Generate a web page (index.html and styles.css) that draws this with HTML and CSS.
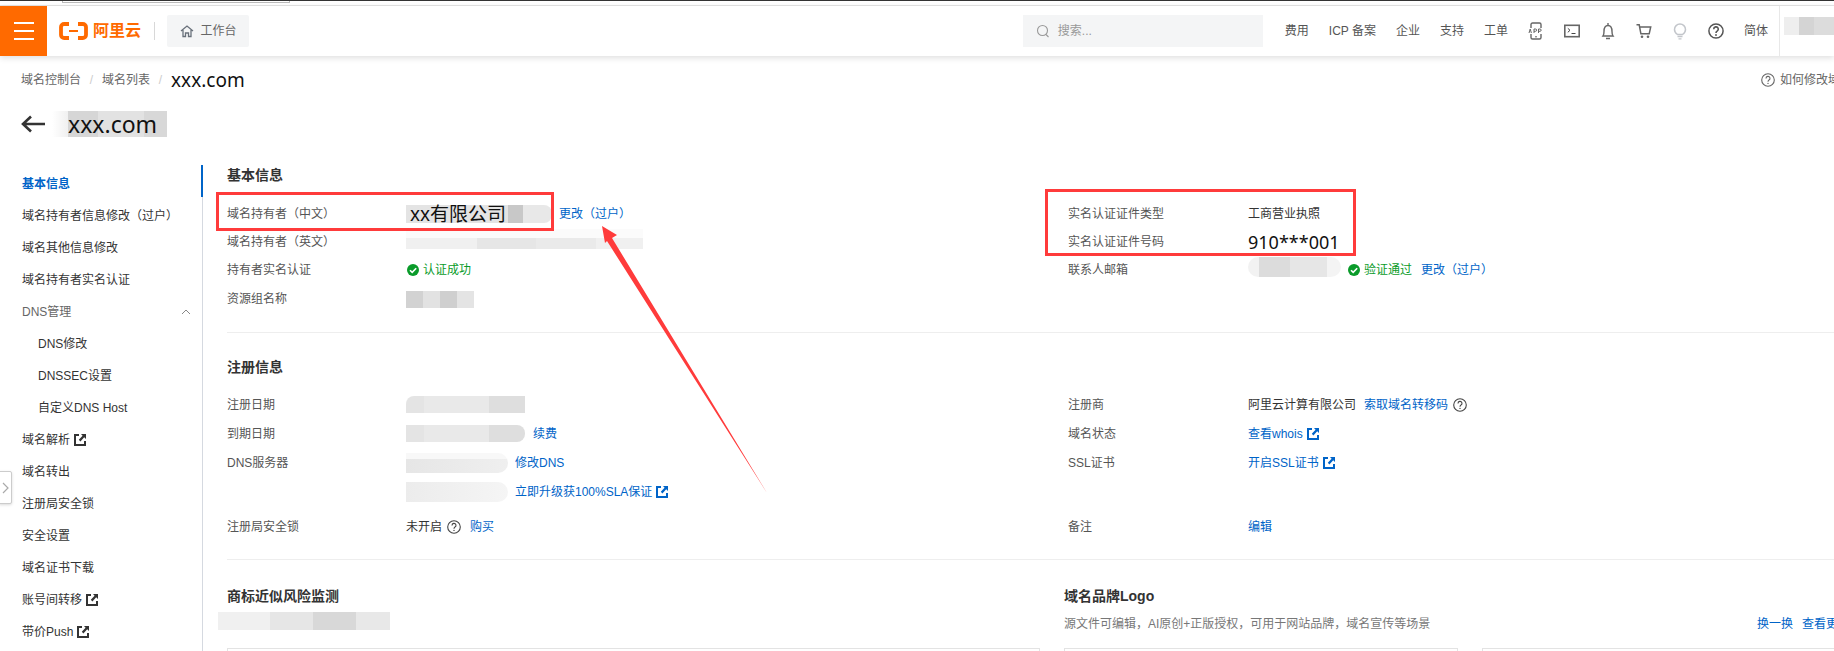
FILE: index.html
```html
<!DOCTYPE html>
<html lang="zh-CN">
<head>
    <meta charset="UTF-8">
    <meta name="viewport" content="width=device-width, initial-scale=1.0">
    <title>域名详情 - xxx.com</title>
    <link rel="stylesheet" href="styles.css">
</head>
<body>
    <svg class="icon-defs" width="0" height="0" aria-hidden="true">
        <symbol id="i-ext" viewBox="0 0 12 12">
            <path d="M5 1H1v10h10V7" fill="none" stroke="currentColor" stroke-width="2"/>
            <path d="M7 0h5v5L10.2 3.2 6.400 7.400 4.800 5.800l3.800-4z" fill="currentColor"/>
        </symbol>
        <symbol id="i-check" viewBox="0 0 12 12">
            <circle cx="6" cy="6" r="6" fill="#0a9b2a"/>
            <path d="M3 6.200l2.200 2.200L9.200 4.200" fill="none" stroke="#fff" stroke-width="1.600"/>
        </symbol>
        <symbol id="i-help" viewBox="0 0 14 14">
            <circle cx="7" cy="7" r="6.300" fill="none" stroke="currentColor" stroke-width="1.100"/>
            <path d="M5 5.400a2 2 0 1 1 3 1.700c-.7.400-1 .8-1 1.600" fill="none" stroke="currentColor" stroke-width="1.100"/>
            <circle cx="7" cy="10.400" r=".7" fill="currentColor"/>
        </symbol>
    </svg>

    <div class="tab-strip"><div class="tab-outline"></div></div>

    <!-- Barra superior -->
    <header class="topbar">
        <button class="menu-btn" aria-label="menu"><i></i><i></i><i></i></button>
        <div class="logo">
            <svg class="logo-mark" width="29" height="18" viewBox="0 0 29 18">
                <path d="M10 2H5.200C3.400 2 2 3.400 2 5v8c0 1.600 1.400 3 3.200 3H10M19 2h4.800C25.600 2 27 3.400 27 5v8c0 1.600-1.400 3-3.200 3H19" fill="none" stroke="#ff6a00" stroke-width="3.800"/>
                <rect x="10" y="8" width="9" height="2" fill="#ff6a00"/>
            </svg>
            <span class="logo-text">阿里云</span>
        </div>
        <div class="logo-sep"></div>
        <a class="workbench">
            <svg width="14" height="14" viewBox="0 0 14 14"><path d="M1 7l6-5 6 5M3 6v6.500h2.500V9h3v3.500H11V6" fill="none" stroke="#68707a" stroke-width="1.300"/></svg>
            工作台
        </a>
        <div class="search">
            <svg width="14" height="14" viewBox="0 0 14 14"><circle cx="6.500" cy="6.500" r="5" fill="none" stroke="#999" stroke-width="1.100"/><path d="M10 10.500l2.500 2.500" stroke="#999" stroke-width="1.100"/></svg>
            <span>搜索...</span>
        </div>
        <nav class="top-nav">
            <a>费用</a>
            <a>ICP 备案</a>
            <a>企业</a>
            <a>支持</a>
            <a>工单</a>
            <svg width="16" height="18" viewBox="0 0 16 18"><rect x="3" y="1" width="10" height="16" rx="1.500" fill="none" stroke="#666" stroke-width="1.400"/><rect x="0" y="6" width="16" height="6" fill="#fff"/><path d="M1 11l1.200-4 1.200 4M6 11V7h1.500a1 1 0 0 1 0 2.300H6M10.500 11V7H12a1 1 0 0 1 0 2.300h-1.500" fill="none" stroke="#666"/><path d="M7 14.800h2" stroke="#666"/></svg>
            <svg width="16" height="14" viewBox="0 0 16 14"><rect x=".8" y="1.300" width="14.400" height="11.400" fill="none" stroke="#666" stroke-width="1.600"/><path d="M3.800 4.300L6 6.300 3.800 8.300M7.500 9.500h4" fill="none" stroke="#444"/></svg>
            <svg width="16" height="18" viewBox="0 0 16 18"><path d="M3 14c.9-1.100 1-2.500 1-4.500C4 6 5.500 3.500 8 3.500s4 2.500 4 6c0 2 .1 3.400 1 4.500zM8 1v2.500M6 16.500h4" fill="none" stroke="#666" stroke-width="1.400"/></svg>
            <svg width="16" height="16" viewBox="0 0 16 16"><path d="M.5 1.800h2.700l1.700 9h8.300l1.500-6.800H4" fill="none" stroke="#666" stroke-width="1.500"/><circle cx="6" cy="13.800" r="1.300" fill="#666"/><circle cx="12" cy="13.800" r="1.300" fill="#666"/></svg>
            <svg width="16" height="17" viewBox="0 0 16 17"><path d="M5.500 11.500C4 10.500 2.500 9 2.500 6.500a5.500 5.500 0 0 1 11 0c0 2.500-1.500 4-3 5z" fill="none" stroke="#c3c6cb" stroke-width="1.500"/><path d="M5.500 13.500h5M6.500 15.800h3" stroke="#c3c6cb" stroke-width="1.300"/></svg>
            <svg class="help-top" width="16" height="16" viewBox="0 0 14 14"><circle cx="7" cy="7" r="6.200" fill="none" stroke="#555" stroke-width="1.300"/><path d="M5 5.400a2 2 0 1 1 3 1.700c-.7.400-1 .8-1 1.600" fill="none" stroke="#555" stroke-width="1.400"/><circle cx="7" cy="10.500" r=".8" fill="#555"/></svg>
            <a>简体</a>
        </nav>
        <div class="user-box"><span class="blur blur-user"></span></div>
    </header>

    <!-- Migalhas -->
    <div class="crumb-row">
        <div class="crumbs">
            <a>域名控制台</a><span class="slash">/</span><a>域名列表</a><span class="slash">/</span><b class="crumb-current">xxx.com</b>
        </div>
        <a class="help-link"><svg width="14" height="14"><use href="#i-help"/></svg>如何修改域名持有者信息</a>
    </div>

    <div class="title-row">
        <svg width="24" height="18" viewBox="0 0 24 18"><path d="M10 1.500L2 9l8 7.500M2.500 9H24" fill="none" stroke="#333" stroke-width="2.600"/></svg>
        <h1 class="domain-title">xxx.com</h1>
    </div>

    <div class="layout">
        <!-- Menu lateral -->
        <aside class="sidebar">
            <a class="side-item active">基本信息</a>
            <a class="side-item">域名持有者信息修改（过户）</a>
            <a class="side-item">域名其他信息修改</a>
            <a class="side-item">域名持有者实名认证</a>
            <a class="side-item side-group">DNS管理
                <svg width="10" height="6" viewBox="0 0 10 6"><path d="M1 5l4-4 4 4" fill="none" stroke="#888"/></svg>
            </a>
            <a class="side-item side-sub">DNS修改</a>
            <a class="side-item side-sub">DNSSEC设置</a>
            <a class="side-item side-sub">自定义DNS Host</a>
            <a class="side-item">域名解析<svg class="ext" width="12" height="12"><use href="#i-ext"/></svg></a>
            <a class="side-item">域名转出</a>
            <a class="side-item">注册局安全锁</a>
            <a class="side-item">安全设置</a>
            <a class="side-item">域名证书下载</a>
            <a class="side-item">账号间转移<svg class="ext" width="12" height="12"><use href="#i-ext"/></svg></a>
            <a class="side-item">带价Push<svg class="ext" width="12" height="12"><use href="#i-ext"/></svg></a>
        </aside>

        <main class="content">
            <!-- Informações básicas -->
            <section class="block block-basic">
                <h2>基本信息</h2>
                <div class="columns">
                    <div class="col">
                        <div class="row"><label>域名持有者（中文）</label><span class="owner-cn">xx有限公司</span><a class="link change-link">更改（过户）</a></div>
                        <div class="row"><label>域名持有者（英文）</label><span class="blur blur-en"></span></div>
                        <div class="row"><label>持有者实名认证</label><svg class="check" width="12" height="12"><use href="#i-check"/></svg><span class="ok">认证成功</span></div>
                        <div class="row row-shift"><label>资源组名称</label><span class="blur blur-group"></span></div>
                    </div>
                    <div class="col">
                        <div class="row"><label>实名认证证件类型</label><span class="value">工商营业执照</span></div>
                        <div class="row"><label>实名认证证件号码</label><span class="cert-no">910***001</span></div>
                        <div class="row"><label>联系人邮箱</label><span class="blur blur-mail"></span><svg class="check" width="12" height="12"><use href="#i-check"/></svg><span class="ok">验证通过</span><a class="link mail-change">更改（过户）</a></div>
                    </div>
                </div>
            </section>

            <!-- Informações de registro -->
            <section class="block block-reg">
                <h2>注册信息</h2>
                <div class="columns">
                    <div class="col">
                        <div class="row"><label>注册日期</label><span class="blur blur-date"></span></div>
                        <div class="row"><label>到期日期</label><span class="blur blur-date blur-date-end"></span><a class="link after-date">续费</a></div>
                        <div class="row"><label>DNS服务器</label><span class="blur blur-dns"></span><a class="link after-dns">修改DNS</a></div>
                        <div class="row row-short"><label></label><span class="blur blur-dns blur-dns-pale"></span><a class="link after-dns">立即升级获100%SLA保证<svg class="ext" width="12" height="12"><use href="#i-ext"/></svg></a></div>
                        <div class="row row-gap"><label>注册局安全锁</label><span class="value">未开启</span><svg class="help-inline" width="14" height="14"><use href="#i-help"/></svg><a class="link">购买</a></div>
                    </div>
                    <div class="col">
                        <div class="row"><label>注册商</label><span class="value">阿里云计算有限公司</span><a class="link after-reg">索取域名转移码</a><svg class="help-inline" width="14" height="14"><use href="#i-help"/></svg></div>
                        <div class="row"><label>域名状态</label><a class="link">查看whois<svg class="ext" width="12" height="12"><use href="#i-ext"/></svg></a></div>
                        <div class="row"><label>SSL证书</label><a class="link">开启SSL证书<svg class="ext" width="12" height="12"><use href="#i-ext"/></svg></a></div>
                        <div class="row row-short"></div>
                        <div class="row row-gap"><label>备注</label><a class="link">编辑</a></div>
                    </div>
                </div>
            </section>

            <!-- Marca -->
            <section class="block block-brand">
                <div class="brand-left">
                    <h2>商标近似风险监测</h2>
                    <span class="blur blur-brand"></span>
                    <div class="card brand-box"></div>
                </div>
                <div class="brand-right">
                    <h2>域名品牌Logo</h2>
                    <div class="desc-row">
                        <span class="desc">源文件可编辑，AI原创+正版授权，可用于网站品牌，域名宣传等场景</span>
                        <span class="desc-links"><a class="link">换一换</a><a class="link">查看更多</a></span>
                    </div>
                    <div class="logo-cards"><div class="card"></div><div class="card"></div></div>
                </div>
            </section>
        </main>
    </div>

    <button class="side-toggle" aria-label="toggle">
        <svg width="7" height="12" viewBox="0 0 7 12"><path d="M1 1l5 5-5 5" fill="none" stroke="#aaa" stroke-width="1.200"/></svg>
    </button>

    <!-- Anotações em vermelho por cima da página -->
    <svg class="annotations" width="1834" height="651" viewBox="0 0 1834 651">
        <rect x="217.500" y="193.500" width="335" height="36" fill="none" stroke="#ff3b3b" stroke-width="3"/>
        <rect x="1046.500" y="190.500" width="308" height="64" fill="none" stroke="#ff3b3b" stroke-width="3"/>
        <polygon points="602,226 617,235 612,238 767,493 607,241 605,243" fill="#ff3b3b"/>
    </svg>
</body>
</html>
```

FILE: styles.css
```css
/* Estilos básicos */
* {
    box-sizing: border-box;
}

html, body {
    height: 651px;
    overflow: hidden;
}

body {
    margin: 0;
    position: relative;
    background-color: #fff;
    color: #333;
    font-family: "Liberation Sans", "Noto Sans CJK SC", sans-serif;
    font-size: 12px;
    line-height: 18px;
    text-spacing-trim: space-all;
}

a {
    color: inherit;
    text-decoration: none;
}

h1, h2 {
    margin: 0;
}

svg {
    flex: none;
}

.icon-defs {
    position: absolute;
}

/* Topo */
.tab-strip {
    height: 6px;
    border-top: 1px solid #333;
    border-bottom: 1px solid #e5e5e5;
}

.tab-outline {
    width: 228px;
    height: 2px;
    margin-left: 62px;
    border: 1px solid #bbb;
    border-top: none;
}

.topbar {
    display: flex;
    align-items: center;
    height: 50px;
    background-color: #fff;
    box-shadow: 0 2px 6px rgba(0, 0, 0, 0.13);
    position: relative;
}

.menu-btn {
    display: flex;
    flex-direction: column;
    justify-content: center;
    align-items: center;
    gap: 6px;
    width: 47px;
    height: 50px;
    padding: 0;
    border: none;
    background-color: #ff6a00;
}

.menu-btn i {
    display: block;
    width: 20px;
    height: 2px;
    background-color: #fff;
}

.logo {
    display: flex;
    align-items: center;
    gap: 5px;
    margin-left: 12px;
}

.logo-text {
    color: #ff6a00;
    font-size: 16px;
    font-weight: 700;
    line-height: 20px;
}

.logo-sep {
    width: 1px;
    height: 18px;
    margin-left: 13px;
    background-color: #d8d8d8;
}

.workbench {
    display: flex;
    align-items: center;
    justify-content: center;
    gap: 7px;
    width: 82px;
    height: 32px;
    margin-left: 12px;
    background-color: #f4f5f6;
    border-radius: 2px;
    color: #666;
}

.search {
    display: flex;
    align-items: center;
    gap: 8px;
    width: 240px;
    height: 32px;
    margin-left: auto;
    padding-left: 13px;
    background-color: #f4f5f6;
    color: #999;
}

.top-nav {
    display: flex;
    align-items: center;
    gap: 20px;
    margin-left: 22px;
    color: #555;
}

.user-box {
    width: 55px;
    height: 50px;
    margin-left: 11px;
    padding: 11px 0 0 4px;
    border-left: 1px solid #e8e8e8;
}

/* Blocos desfocados */
.blur {
    display: block;
    flex: none;
    background-color: #e6e6e6;
}

.blur-user {
    height: 18px;
    background: linear-gradient(90deg, #eee 0 30%, #d4d4d4 30% 60%, #dcdcdc 60%);
}

.blur-en {
    width: 237px;
    height: 20px;
    margin-top: -6px;
    background:
        linear-gradient(180deg, #fbfbfb 0 45%, transparent 45%),
        linear-gradient(90deg, #f0f0f0 0 30%, #e6e6e6 30% 55%, #eaeaea 55% 80%, #f0f0f0 80%);
}

.blur-group {
    width: 68px;
    height: 17px;
    background: linear-gradient(90deg, #d2d2d2 0 25%, #e2e2e2 25% 50%, #cfcfcf 50% 75%, #e4e4e4 75%);
}

.blur-mail {
    width: 93px;
    height: 20px;
    margin-top: -6px;
    margin-right: 6px;
    border-radius: 10px;
    background: linear-gradient(90deg, #f2f2f2 0 12%, #dcdcdc 12% 45%, #e6e6e6 45% 85%, #f4f4f4 85%);
}

.blur-date {
    width: 119px;
    height: 17px;
    border-radius: 8px 0 0 0;
    background: linear-gradient(90deg, #e4e4e4 0 15%, #e9e9e9 15% 70%, #dedede 70%);
}

.blur-date-end {
    border-radius: 0 8px 8px 0;
}

.blur-dns {
    width: 102px;
    height: 20px;
    border-radius: 0 10px 10px 0;
    background:
        linear-gradient(180deg, #f8f8f8 0 30%, transparent 30%),
        linear-gradient(90deg, #e6e6e6, #efefef);
}

.blur-dns-pale {
    background: linear-gradient(90deg, #ececec, #f5f5f5);
}

.blur-brand {
    width: 172px;
    height: 18px;
    margin: 6px 0 0 -9px;
    background: linear-gradient(90deg, #f0f0f0 0 30%, #e6e6e6 30% 55%, #d8d8d8 55% 80%, #e8e8e8 80%);
}

/* Migalhas e título */
.crumb-row {
    display: grid;
    grid-template-columns: 1740px max-content;
    align-items: center;
    height: 24px;
    margin-top: 12px;
    padding-left: 21px;
    white-space: nowrap;
}

.crumbs {
    display: flex;
    align-items: center;
    color: #666;
}

.slash {
    width: 21px;
    color: #ccc;
    text-align: center;
}

.crumb-current {
    color: #111;
    font-family: "Noto Sans", sans-serif;
    font-size: 19px;
    font-weight: 400;
    line-height: 24px;
}

.help-link {
    display: flex;
    align-items: center;
    gap: 5px;
    color: #666;
}

.title-row {
    display: flex;
    align-items: center;
    gap: 7px;
    height: 32px;
    margin-top: 16px;
    padding-left: 21px;
}

.domain-title {
    padding: 0 10px 0 16px;
    background: linear-gradient(90deg, #fff 0, #f0f0f0 14%, #d6d6d6 14% 40%, #e2e2e2 40% 80%, #d8d8d8 80%);
    color: #111;
    font-family: "Noto Sans", sans-serif;
    font-size: 23px;
    font-weight: 400;
    line-height: 26px;
}

/* Menu lateral */
.layout {
    display: flex;
    margin-top: 25px;
}

.sidebar {
    flex: none;
    width: 203px;
    height: 486px;
    padding-top: 3px;
    border-right: 1px solid #d5d9e0;
    position: relative;
}

.side-item {
    display: flex;
    align-items: center;
    height: 32px;
    padding-left: 22px;
    color: #333;
    white-space: nowrap;
}

.side-item.active {
    color: #0064c8;
    font-weight: 700;
}

.side-item.active::after {
    content: "";
    position: absolute;
    top: 0;
    right: -1px;
    width: 2px;
    height: 32px;
    background-color: #0064c8;
}

.side-group {
    color: #666;
    justify-content: space-between;
    padding-right: 11px;
}

.side-sub {
    padding-left: 38px;
}

.ext {
    margin-left: 4px;
}

.side-item .ext {
    color: #333;
}

.side-toggle {
    position: absolute;
    top: 471px;
    left: -1px;
    display: flex;
    align-items: center;
    justify-content: center;
    width: 13px;
    height: 33px;
    padding: 0;
    background-color: #fff;
    border: 1px solid #ccc;
    border-radius: 0 2px 2px 0;
    box-shadow: 0 1px 3px rgba(0, 0, 0, 0.15);
}

/* Conteúdo */
.content {
    flex: 1;
    min-width: 0;
    overflow: hidden;
}

.block {
    margin-left: 24px;
}

.block h2 {
    color: #333;
    font-size: 14px;
    font-weight: 700;
    line-height: 20px;
}

.block-basic {
    padding-bottom: 19px;
    border-bottom: 1px solid #eee;
}

.block-basic .columns {
    margin-top: 15px;
}

.block-reg {
    padding: 24px 0 18px;
    border-bottom: 1px solid #eee;
}

.block-reg .columns {
    margin-top: 13px;
}

.block-reg .row:nth-child(3) {
    height: 30px;
}

.block-basic .row {
    height: 28px;
}

.columns {
    display: grid;
    grid-template-columns: 841px 1fr;
}

.row {
    display: flex;
    align-items: center;
    height: 29px;
    white-space: nowrap;
}

.row label {
    flex: none;
    width: 179px;
    color: #555;
}

.col + .col .row label {
    width: 180px;
}

.block-basic .row-shift {
    margin-top: 1px;
}

.block-reg .row-short {
    height: 27px;
}

.row-gap {
    margin-top: 7px;
}

.value {
    color: #333;
}

.link {
    display: inline-flex;
    align-items: center;
    color: #0064c8;
}

.ok {
    margin-left: 4px;
    color: #0a9b2a;
}

.check {
    margin-left: 1px;
}

.owner-cn {
    flex: none;
    width: 146px;
    padding-left: 4px;
    border-radius: 0 8px 8px 0;
    background: linear-gradient(90deg, #e4e4e4 0 70%, #c8c8c8 70% 80%, #e8e8e8 80%);
    color: #111;
    font-family: "Noto Sans", "Noto Sans CJK SC", sans-serif;
    font-size: 19px;
    line-height: 18px;
}

.change-link {
    margin-left: 7px;
}

.cert-no {
    color: #111;
    font-family: "Noto Sans", sans-serif;
    font-size: 18px;
}

.mail-change {
    margin-left: 9px;
}

.after-date {
    margin-left: 8px;
}

.after-dns {
    margin-left: 7px;
}

.after-reg {
    margin-left: 8px;
}

.help-inline {
    margin: 0 9px 0 5px;
    color: #444;
}

/* Marca */
.block-brand {
    display: grid;
    grid-template-columns: 837px 786px;
    padding-top: 26px;
}

.brand-left, .brand-right {
    display: flex;
    flex-direction: column;
}

.card {
    height: 40px;
    border: 1px solid #e3e3e3;
}

.brand-box {
    width: 813px;
    margin-top: 18px;
}

.desc-row {
    display: flex;
    justify-content: space-between;
    height: 20px;
    margin-top: 8px;
    align-items: center;
    white-space: nowrap;
}

.desc {
    color: #777;
}

.desc-links {
    display: flex;
    gap: 9px;
}

.logo-cards {
    display: grid;
    grid-template-columns: 394px 380px;
    gap: 24px;
    margin-top: 14px;
}

/* Anotações */
.annotations {
    position: absolute;
    top: 0;
    left: 0;
    pointer-events: none;
}
```
